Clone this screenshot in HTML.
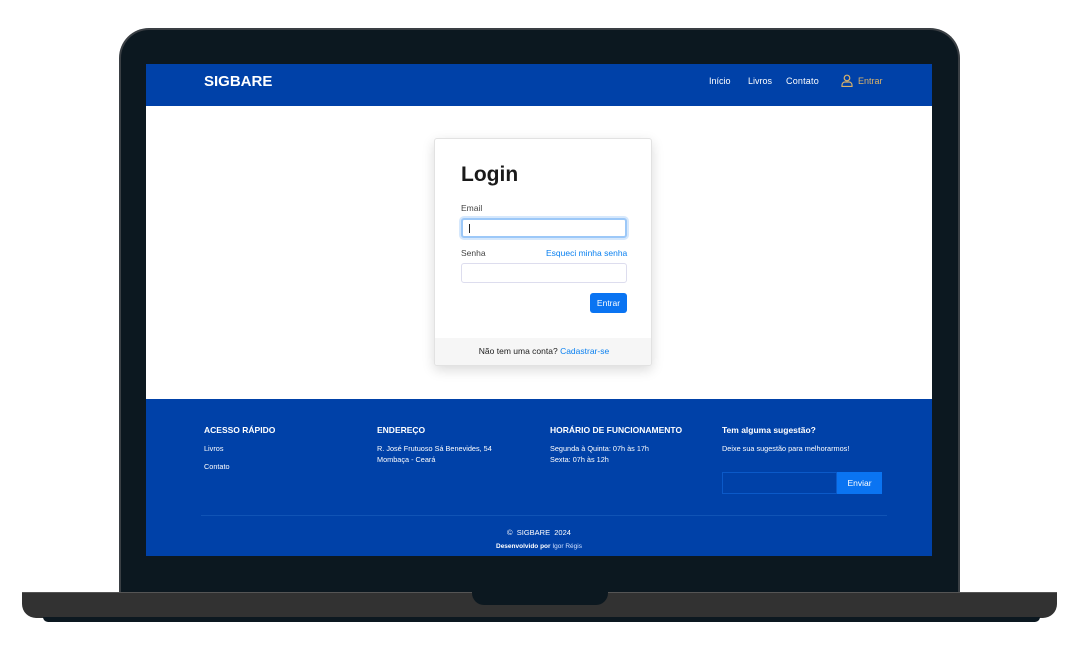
<!DOCTYPE html>
<html><head><meta charset="utf-8"><style>
*{margin:0;padding:0;box-sizing:border-box}
body{width:1080px;height:663px;background:#fff;position:relative;overflow:hidden;font-family:"Liberation Sans",sans-serif}
.lid{position:absolute;left:119px;top:28px;width:841px;height:566px;background:#0c1820;border-radius:30px 30px 0 0;border:2px solid #3a3f44;border-bottom:none}
.screen{position:absolute;left:146px;top:64px;width:786px;height:492px;background:#fff;overflow:hidden}
.base{position:absolute;left:22px;top:592px;width:1035px;height:26px;background:#323232;border-radius:0 0 14px 14px;border-top:1px solid #555}
.base2{position:absolute;left:43px;top:617px;width:997px;height:5px;background:#0c1820;border-radius:0 0 6px 6px}
.notch{position:absolute;left:472px;top:592px;width:136px;height:13px;background:#0c1820;border-radius:0 0 12px 12px}
.nav{position:absolute;left:0;top:0;width:786px;height:42px;background:#0041a8}
.logo{position:absolute;left:58px;top:9px;color:#fff;font-weight:bold;font-size:15px}
.links{position:absolute;top:12px;color:#fff;font-size:9px}
.entrar{position:absolute;left:695px;top:10px;color:#d9b26a;font-size:9px;display:flex;align-items:center;gap:5px}
.card{position:absolute;left:288px;top:74px;width:218px;height:228px;background:#fff;border:1px solid #e2e2e2;border-radius:3px;box-shadow:0 4px 12px rgba(0,0,0,.15);overflow:hidden}
.card h1{position:absolute;left:26px;top:24px;font-size:21px;color:#1a1a1a}
.lab{position:absolute;font-size:8.5px;color:#444}
.inp{position:absolute;left:26px;width:166px;height:20px;border:1px solid #dde;border-radius:3px;background:#fff}
.btn{position:absolute;left:155px;top:154px;width:37px;height:20px;background:#0a74f2;color:#fff;font-size:8.5px;border-radius:3px;text-align:center;line-height:20px}
.cf{position:absolute;left:0;top:199px;width:218px;height:29px;background:#f6f6f6;font-size:8.5px;color:#222;text-align:center;line-height:27px}
.blue{color:#0a80f0}
.foot{position:absolute;left:0;top:335px;width:786px;height:157px;background:#0041a8;color:#fff}
.col{position:absolute;top:26px;font-size:7.3px;line-height:11px}
.col b{display:block;font-size:8.5px;margin-bottom:7px}
.hr{position:absolute;left:55px;top:116px;width:686px;height:1px;background:#1053b5}
</style></head><body>
<div class="lid"></div>
<div class="screen">
 <div class="nav"><div class="logo">SIGBARE</div>
 <div class="links" style="left:563px">Início</div>
 <div class="links" style="left:602px">Livros</div>
 <div class="links" style="left:640px;letter-spacing:.2px">Contato</div>
 <div class="entrar"><svg width="12" height="13" viewBox="0 0 12 13" fill="none" stroke="#d9b26a" stroke-width="1.2"><circle cx="6" cy="4" r="2.8"/><path d="M1 12.5v-1.5a3 3 0 0 1 3-3h4a3 3 0 0 1 3 3v1.5z"/></svg>Entrar</div></div>
 <div class="card">
  <h1>Login</h1>
  <div class="lab" style="left:26px;top:64px">Email</div>
  <div class="inp" style="top:79px;border:2px solid #9cc8f8;box-shadow:0 0 0 2px #d6e8fc"><div style="position:absolute;left:6px;top:4px;width:1px;height:9px;background:#222"></div></div>
  <div class="lab" style="left:26px;top:109px">Senha</div>
  <div class="lab blue" style="left:111px;top:109px">Esqueci minha senha</div>
  <div class="inp" style="top:124px"></div>
  <div class="btn">Entrar</div>
  <div class="cf">Não tem uma conta? <span class="blue">Cadastrar-se</span></div>
 </div>
 <div class="foot">
  <div class="col" style="left:58px"><b>ACESSO RÁPIDO</b>Livros<br><div style="height:7px"></div>Contato</div>
  <div class="col" style="left:231px"><b>ENDEREÇO</b>R. José Frutuoso Sá Benevides, 54<br>Mombaça - Ceará</div>
  <div class="col" style="left:404px"><b>HORÁRIO DE FUNCIONAMENTO</b>Segunda à Quinta: 07h às 17h<br>Sexta: 07h às 12h</div>
  <div class="col" style="left:576px"><b>Tem alguma sugestão?</b>Deixe sua sugestão para melhorarmos!</div>
  <div style="position:absolute;left:576px;top:73px;width:115px;height:22px;border:1px solid #0b59c8;background:#0041a8"></div>
  <div style="position:absolute;left:691px;top:73px;width:45px;height:22px;background:#0a74f2;font-size:8.5px;text-align:center;line-height:22px">Enviar</div>
  <div class="hr"></div>
  <div style="position:absolute;left:0;top:129px;width:786px;text-align:center;font-size:7.5px">©&nbsp; SIGBARE&nbsp; 2024</div>
  <div style="position:absolute;left:0;top:144px;width:786px;text-align:center;font-size:6.5px;font-weight:bold">Desenvolvido por <span style="font-weight:normal;color:#cfe0ff">Igor Régis</span></div>
 </div>
</div>
<div class="base"></div><div class="base2"></div><div class="notch"></div>
</body></html>
